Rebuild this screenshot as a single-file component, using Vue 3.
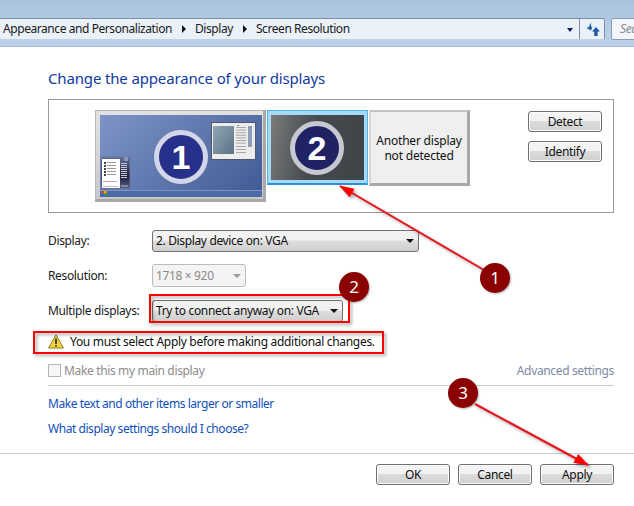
<script setup>
const rows = [
  { label: 'Display:', value: '2. Display device on: VGA', cls: 'sel-display' },
  { label: 'Resolution:', value: '1718 × 920', cls: 'sel-res' },
  { label: 'Multiple displays:', value: 'Try to connect anyway on: VGA', cls: 'sel-multi' },
]
const badges = [
  { n: 1, x: 495, y: 278 },
  { n: 2, x: 354, y: 287 },
  { n: 3, x: 463, y: 393 },
]
const bullets = [0, 1, 2, 3, 4]
const sideLines = [0, 1, 2, 3, 4, 5, 6, 7]
const winTop = [0, 1, 2, 3, 4, 5, 6]
const winBottom = [0, 1, 2]
</script>

<template>
  <div class="page">
    <header class="toolbar">
      <div class="address">
        <span>Appearance and Personalization</span>
        <i class="crumb"></i>
        <span>Display</span>
        <i class="crumb"></i>
        <span>Screen Resolution</span>
        <i class="drop"></i>
        <span class="refresh">
          <svg width="15" height="15" viewBox="0 0 15 15">
            <path d="M7.5 1.5 3.5 5H1l3.8 4L7.5 5.6H6z" fill="#2a62a8" transform="rotate(-20 4 5)" />
            <path d="M11 5 7 9.5h2.2V14h3.4V9.5H15z" fill="#1f5aa6" />
          </svg>
        </span>
      </div>
      <div class="search">Sea</div>
    </header>

    <main class="content">
      <h1 class="title">Change the appearance of your displays</h1>

      <section class="panel">
        <div class="monitors">
          <div class="mon mon-one">
            <div class="screen-one">
              <svg class="thumbs" width="161" height="82" viewBox="0 0 161 82">
                <defs>
                  <linearGradient id="pic" x1="0" y1="0" x2="1" y2="1">
                    <stop offset="0" stop-color="#93a8b5" />
                    <stop offset="1" stop-color="#5c7285" />
                  </linearGradient>
                  <linearGradient id="gad" x1="0" y1="0" x2="0" y2="1">
                    <stop offset="0" stop-color="#5f6f9f" />
                    <stop offset="0.6" stop-color="#1f2038" />
                    <stop offset="1" stop-color="#56638e" />
                  </linearGradient>
                </defs>
                <rect x="111.5" y="7.5" width="44" height="37" fill="#ececec" stroke="#4f5670" />
                <rect x="113" y="11" width="21" height="28" fill="url(#pic)" />
                <rect x="137" y="10" width="2" height="1" fill="#888" />
                <rect v-for="i in winTop" :key="'t' + i" x="136" :y="12 + i * 2.6" width="10" height="1" fill="#a8a8a8" />
                <rect v-for="i in winBottom" :key="'b' + i" x="136" :y="31 + i * 3" width="10" height="1" fill="#a8a8a8" />
                <rect x="148" y="11" width="4" height="21" fill="#8ba0b8" />
                <rect x="1" y="42" width="29" height="32" fill="url(#gad)" stroke="#6d7aa0" />
                <rect x="2" y="44" width="18" height="29" fill="#fff" />
                <rect x="24" y="42" width="4" height="4" fill="#8a96b8" />
                <g v-for="i in bullets" :key="'g' + i">
                  <rect x="4" :y="47 + i * 3" width="2" height="2" fill="#444" />
                  <rect x="7" :y="47 + i * 3" width="9" height="1" fill="#999" />
                </g>
                <rect x="3" y="66" width="14" height="1" fill="#c9a0a0" />
                <rect x="3" y="71" width="15" height="1" fill="#bbb" />
                <rect v-for="i in sideLines" :key="'s' + i" x="21" :y="48 + i * 2" width="6" height="1" fill="#c4c8d4" />
                <rect x="21" y="70" width="7" height="2" fill="#7a86a8" />
              </svg>
              <div class="num">1</div>
              <div class="taskbar"><i class="start"></i></div>
            </div>
          </div>
          <div class="mon mon-two">
            <div class="screen-two"><div class="num num-dark">2</div></div>
          </div>
          <div class="mon mon-three">Another display<br />not detected</div>
        </div>
        <div class="side-btns">
          <button class="btn">Detect</button>
          <button class="btn">Identify</button>
        </div>
      </section>

      <div class="form">
        <div v-for="r in rows" :key="r.label" class="row">
          <label class="row-label">{{ r.label }}</label>
          <div class="select" :class="r.cls">
            <span>{{ r.value }}</span><i class="caret"></i>
          </div>
        </div>
      </div>

      <div class="warning">
        <svg width="16" height="15" viewBox="0 0 16 15">
          <path d="M8 .8 15.4 14H.6z" fill="#f5d33c" stroke="#8a7a20" stroke-width="1" stroke-linejoin="round" />
          <rect x="7.2" y="4.5" width="1.6" height="5.5" fill="#222" />
          <rect x="7.2" y="11" width="1.6" height="1.6" fill="#222" />
        </svg>
        <span>You must select Apply before making additional changes.</span>
      </div>

      <div class="main-row">
        <label class="check"><i class="box"></i>Make this my main display</label>
        <span class="advanced">Advanced settings</span>
      </div>

      <div class="links">
        <a>Make text and other items larger or smaller</a>
        <a>What display settings should I choose?</a>
      </div>
    </main>

    <footer class="footer">
      <button class="btn">OK</button>
      <button class="btn">Cancel</button>
      <button class="btn">Apply</button>
    </footer>

    <svg class="arrows" width="634" height="506" viewBox="0 0 634 506">
      <defs>
        <marker id="head" markerWidth="16" markerHeight="12" refX="14" refY="5" orient="auto" markerUnits="userSpaceOnUse">
          <path d="M0 0 15 5 0 10z" fill="#f00" />
        </marker>
      </defs>
      <g class="shadowed">
        <line x1="484" y1="270" x2="340" y2="186" stroke="#e8141c" stroke-width="2" marker-end="url(#head)" />
        <line x1="475" y1="404" x2="588" y2="465" stroke="#e8141c" stroke-width="2" marker-end="url(#head)" />
        <rect x="150" y="295" width="199" height="27" fill="none" stroke="#f00" stroke-width="2" />
        <rect x="34" y="332" width="349" height="21" fill="none" stroke="#f00" stroke-width="2" />
      </g>
    </svg>

    <div
      v-for="b in badges"
      :key="b.n"
      class="badge"
      :style="{ left: b.x - 15 + 'px', top: b.y - 15 + 'px' }"
    >{{ b.n }}</div>
  </div>
</template>

<style>
html, body { margin: 0; background: #fff; }
</style>

<style scoped>
.page {
  position: relative;
  width: 634px;
  height: 506px;
  overflow: hidden;
  background: #fff;
  color: #1a1a1a;
  font-family: "Noto Sans", "Open Sans", sans-serif;
  font-size: 12px;
  letter-spacing: -0.35px;
}
.toolbar {
  height: 47px;
  box-sizing: border-box;
  padding-top: 18px;
  display: flex;
  gap: 6px;
  background: linear-gradient(#a9c3de, #bcd2ea);
  border-bottom: 1px solid #a9bdd6;
}
.address {
  width: 606px;
  flex: none;
  height: 22px;
  box-sizing: border-box;
  margin-left: -1px;
  padding-left: 3px;
  display: flex;
  align-items: center;
  background: #eaf1f9;
  border: 1px solid #7d8ea3;
  border-bottom-color: #c3d0df;
  border-radius: 2px;
  line-height: 20px;
  letter-spacing: -0.43px;
}
.crumb {
  width: 0;
  height: 0;
  margin: 0 9px 0 10px;
  border-left: 4px solid #111;
  border-top: 4px solid transparent;
  border-bottom: 4px solid transparent;
}
.drop {
  width: 0;
  height: 0;
  margin-left: auto;
  margin-right: 6px;
  margin-top: 2px;
  border-top: 4px solid #0c1a5a;
  border-left: 3.5px solid transparent;
  border-right: 3.5px solid transparent;
  border-bottom: 0;
}
.refresh {
  width: 24px;
  height: 20px;
  border-left: 1px solid #7d8ea3;
  display: flex;
  align-items: center;
  justify-content: center;
}
.search {
  width: 40px;
  flex: none;
  height: 22px;
  box-sizing: border-box;
  padding-left: 8px;
  background: #f3f6fb;
  border: 1px solid #8c9bb0;
  border-radius: 2px;
  color: #8a8a8a;
  font-style: italic;
  line-height: 20px;
  overflow: hidden;
}
.content {
  padding: 0 20px 0 48px;
}
.title {
  margin: 21px 0 0;
  height: 20px;
  font-size: 15px;
  font-weight: 400;
  line-height: 20px;
  letter-spacing: -0.15px;
  color: #0f3c9e;
}
.panel {
  margin-top: 11px;
  height: 114px;
  box-sizing: border-box;
  border: 1px solid #9a9a9a;
  display: flex;
  padding: 10px 11px 0 46px;
  justify-content: space-between;
}
.monitors {
  display: flex;
  align-items: flex-start;
  gap: 1px;
}
.mon {
  box-sizing: border-box;
  background: linear-gradient(#e2e2e2, #c9c9c9);
  border: 1px solid #b5b5b5;
  border-right: 3px solid #a8a8a8;
  border-bottom: 3px solid #a8a8a8;
}
.mon-one {
  width: 171px;
  height: 92px;
  padding: 4px 1px 0 4px;
}
.screen-one {
  position: relative;
  height: 82px;
  background: linear-gradient(135deg, #7e94c6, #3f5a94);
  overflow: hidden;
}
.thumbs {
  position: absolute;
  left: 0;
  top: 0;
}
.num {
  position: absolute;
  left: 54px;
  top: 15px;
  width: 54px;
  height: 54px;
  box-sizing: border-box;
  border: 5px solid #d3d6e8;
  border-radius: 50%;
  background: #27308a;
  color: #fff;
  font: 700 34px/44px "Liberation Sans", sans-serif;
  text-align: center;
  letter-spacing: 0;
}
.num-dark {
  left: 19px;
  top: 6px;
  background: #1f2364;
  border-color: #c8c8d2;
}
.taskbar {
  position: absolute;
  left: 0;
  right: 0;
  bottom: 0;
  height: 6px;
  background: #4e6aa6;
  border-top: 1px solid #7d93c4;
}
.start {
  display: block;
  width: 5px;
  height: 5px;
  margin-left: 2px;
  background: conic-gradient(#e8a020 25%, #3a9a3a 0 50%, #2c6ac0 0 75%, #d8442a 0);
}
.mon-two {
  width: 101px;
  height: 75px;
  padding: 4px 3px 3px;
  border: 1px solid #50b4f0;
  border-bottom: 2px solid #2a90e0;
  background: #a4daf8;
}
.screen-two {
  position: relative;
  height: 65px;
  background: linear-gradient(100deg, #7a7a7a, #444a4e 45%, #3e4448);
}
.mon-three {
  width: 101px;
  height: 76px;
  background: #efefef;
  border-top: 2px solid #c4c4c4;
  border-left: 2px solid #d6d6d6;
  padding-top: 21px;
  line-height: 15px;
  text-align: center;
  letter-spacing: -0.2px;
  color: #111;
}
.side-btns {
  display: flex;
  flex-direction: column;
  gap: 9px;
  padding-top: 1px;
}
.btn {
  width: 74px;
  height: 21px;
  box-sizing: border-box;
  padding: 0;
  font: inherit;
  letter-spacing: inherit;
  color: #111;
  line-height: 17px;
  border: 1px solid #707070;
  border-radius: 3px;
  background: linear-gradient(#f3f3f3 0 45%, #dcdcdc 50%, #d0d0d0);
  box-shadow: inset 0 0 0 1px #fbfbfb;
}
.form {
  margin-top: 10px;
  display: flex;
  flex-direction: column;
}
.row {
  display: flex;
  align-items: center;
  height: 35px;
}
.row-label {
  width: 104px;
  flex: none;
}
.select {
  box-sizing: border-box;
  height: 22px;
  display: flex;
  align-items: center;
  justify-content: space-between;
  padding: 0 4px 0 3px;
  border: 1px solid #707070;
  border-radius: 3px;
  background: linear-gradient(#f2f2f2 0 45%, #dedede 50%, #cfcfcf);
  color: #111;
}
.sel-display { width: 267px; }
.sel-res {
  width: 94px;
  height: 23px;
  border-color: #bcbcbc;
  background: #f4f4f4;
  color: #8a8a8a;
}
.sel-res .caret { border-top-color: #999; }
.sel-multi { width: 191px; }
.caret {
  width: 0;
  height: 0;
  border-top: 4px solid #111;
  border-left: 4px solid transparent;
  border-right: 4px solid transparent;
}
.warning {
  margin-top: 3px;
  height: 20px;
  display: flex;
  align-items: center;
  gap: 6px;
  letter-spacing: -0.31px;
  color: #111;
}
.main-row {
  margin-top: 9px;
  height: 20px;
  display: flex;
  align-items: center;
  justify-content: space-between;
  padding-bottom: 5px;
  border-bottom: 1px solid #c9c9c9;
  color: #8c8c8c;
}
.check {
  display: flex;
  align-items: center;
  gap: 3px;
}
.box {
  width: 13px;
  height: 13px;
  box-sizing: border-box;
  border: 1px solid #b4b4b4;
  background: #f6f6f6;
}
.advanced { color: #7d8aa3; }
.links {
  margin-top: 9px;
  display: flex;
  flex-direction: column;
  gap: 7px;
  line-height: 18px;
  letter-spacing: -0.45px;
  color: #0f4fb8;
}
.footer {
  position: absolute;
  left: 0;
  right: 0;
  top: 453px;
  box-sizing: border-box;
  height: 53px;
  padding: 10px 20px 0 0;
  display: flex;
  justify-content: flex-end;
  gap: 8px;
  border-top: 1px solid #c9c9c9;
}
.arrows {
  position: absolute;
  left: 0;
  top: 0;
  pointer-events: none;
}
.shadowed {
  filter: drop-shadow(2px 2px 1.5px rgba(0, 0, 0, 0.35));
}
.badge {
  position: absolute;
  width: 30px;
  height: 30px;
  border-radius: 50%;
  background: #8b0000;
  color: #fff;
  font-size: 17px;
  line-height: 29px;
  text-align: center;
  letter-spacing: 0;
  box-shadow: 1px 1px 2px rgba(0, 0, 0, 0.3);
}
</style>
